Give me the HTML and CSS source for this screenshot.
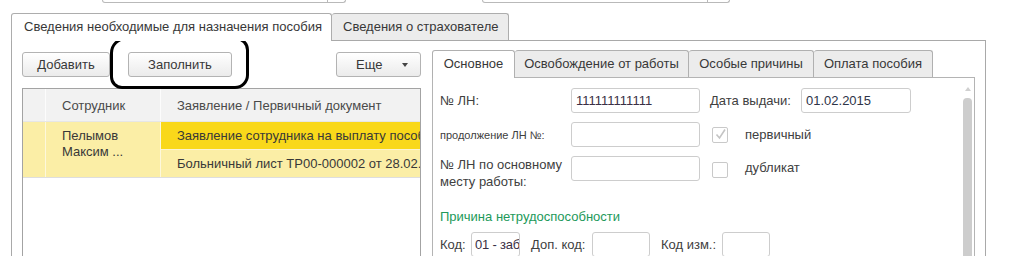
FILE: index.html
```html
<!DOCTYPE html>
<html lang="ru">
<head>
<meta charset="utf-8">
<title>Сведения</title>
<link rel="stylesheet" href="styles.css">
</head>
<body>
<div class="page">
  <div class="topfields">
    <div class="tf tf1"><span class="tf-text"></span><span class="tf-btn"></span></div>
    <div class="tf tf2"><span class="tf-text"></span><span class="tf-btn"></span></div>
  </div>
  <div class="maintabs">
    <div class="mtab active">Сведения необходимые для назначения пособия</div>
    <div class="mtab">Сведения о страхователе</div>
  </div>
  <div class="mainpanel">
    <div class="leftcol">
      <div class="btnrow">
        <button class="btn btn-add">Добавить</button>
        <button class="btn btn-fill">Заполнить</button>
        <div class="oval"></div>
        <button class="btn btn-more"><span>Еще</span><span class="caret"></span></button>
      </div>
      <div class="table">
        <div class="thead">
          <div class="c c1"></div>
          <div class="c c2">Сотрудник</div>
          <div class="c c3">Заявление / Первичный документ</div>
        </div>
        <div class="trow">
          <div class="c c1"></div>
          <div class="c c2 emp">Пелымов<br>Максим ...</div>
          <div class="c c3 docs">
            <div class="doc sel">Заявление сотрудника на выплату пособия</div>
            <div class="doc">Больничный лист ТР00-000002 от 28.02.2015</div>
          </div>
        </div>
      </div>
    </div>
    <div class="rightcol">
      <div class="subtabs">
        <div class="stab active w1">Основное</div>
        <div class="stab w2">Освобождение от работы</div>
        <div class="stab w3">Особые причины</div>
        <div class="stab w4">Оплата пособия</div>
      </div>
      <div class="subpanel">
        <div class="form">
          <div class="frow r1">
            <div class="lbl lw">№ ЛН:</div>
            <div class="inp iw num">111111111111</div>
            <div class="lbl ldate">Дата выдачи:</div>
            <div class="inp idate">01.02.2015</div>
          </div>
          <div class="frow r2">
            <div class="lbl lw small">продолжение ЛН №:</div>
            <div class="inp iw"></div>
            <div class="chk checked"><svg width="13" height="13" viewBox="0 0 13 13"><path d="M2.5 6.5 L5.5 10 L11 1.5" fill="none" stroke="#c4c4c4" stroke-width="1.6"/></svg></div>
            <div class="lbl chklbl">первичный</div>
          </div>
          <div class="frow r3">
            <div class="lbl lw two">№ ЛН по основному<br>месту работы:</div>
            <div class="inp iw"></div>
            <div class="chk chk2"></div>
            <div class="lbl chklbl chklbl2">дубликат</div>
          </div>
          <div class="section">Причина нетрудоспособности</div>
          <div class="frow r5">
            <div class="lbl lk1">Код:</div>
            <div class="inp ik1"><span class="clip">01 - заболевание</span></div>
            <div class="lbl lk2">Доп. код:</div>
            <div class="inp ik2"></div>
            <div class="lbl lk3">Код изм.:</div>
            <div class="inp ik3"></div>
          </div>
        </div>
        <div class="scroll">
          <div class="arrow"></div>
          <div class="thumb"></div>
        </div>
      </div>
    </div>
  </div>
</div>
</body>
</html>
```
FILE: styles.css
```css
* { box-sizing: border-box; }
html, body { margin: 0; padding: 0; background: #fff; }
body {
  width: 1012px;
  height: 256px;
  overflow: hidden;
  font-family: "Liberation Sans", Arial, sans-serif;
  font-size: 13px;
  color: #383838;
}
.page { width: 1012px; }

/* top fields (only bottom visible) */
.topfields { display: flex; height: 13px; align-items: flex-start; }
.tf {
  display: flex;
  height: 3px;
  border: 1px solid #b9b9b9;
  border-top: none;
  border-radius: 0 0 3px 3px;
}
.tf1 { margin-left: 102px; width: 244px; }
.tf2 { margin-left: 136px; width: 248px; }
.tf-text { flex: 1; }
.tf1 .tf-btn { width: 18px; border-left: 1px solid #b9b9b9; }
.tf2 .tf-btn { width: 22px; border-left: 1px solid #b9b9b9; }

/* main tabs */
.maintabs { display: flex; align-items: flex-end; height: 27px; padding-left: 11px; }
.mtab {
  height: 27px;
  border: 1px solid #adadad;
  border-bottom: none;
  border-radius: 3px 3px 0 0;
  background: #ececec;
  display: flex;
  align-items: center;
  white-space: nowrap;
}
.mtab.active {
  width: 321px;
  height: 28px;
  margin-bottom: -1px;
  background: #fff;
  position: relative;
  z-index: 1;
  padding-left: 12px;
  padding-bottom: 2px;
}
.mtab:not(.active) {
  width: 177px;
  border-left: none;
  padding-left: 11px;
  padding-bottom: 1px;
}

/* main panel */
.mainpanel {
  margin-left: 11px;
  width: 975px;
  height: 230px;
  border: 1px solid #a9a9a9;
  border-bottom: none;
  padding: 9px 10px 0 10px;
  display: flex;
  gap: 11px;
}
.leftcol { width: 399px; margin-top: 2px; display: flex; flex-direction: column; }
.btnrow { display: flex; position: relative; height: 25px; }
.btn {
  height: 25px;
  font-family: inherit;
  font-size: 13px;
  color: #383838;
  border: 1px solid #b3b3b3;
  border-radius: 3px;
  background: linear-gradient(#ffffff, #ebebeb);
  padding: 0;
  margin: 0;
}
.btn-add { width: 88px; }
.btn-fill { width: 104px; margin-left: 18px; }
.btn-more {
  width: 85px;
  margin-left: auto;
  display: flex;
  align-items: center;
  padding-left: 19px;
}
.btn-more span:first-child { flex: 1; text-align: left; }
.caret {
  width: 0; height: 0;
  border-left: 3.5px solid transparent;
  border-right: 3.5px solid transparent;
  border-top: 4px solid #444;
  margin-right: 12px;
}
.oval {
  position: absolute;
  left: 88px;
  top: -15px;
  width: 139px;
  height: 52px;
  border: 3px solid #000;
  border-radius: 16px 13px 14px 12px;
  pointer-events: none;
}

/* table */
.table {
  margin-top: 11px;
  border: 1px solid #a3a3a3;
  border-bottom: none;
  flex: 1;
}
.thead, .trow { display: flex; }
.thead { height: 33px; background: #f2f2f2; border-bottom: 1px solid #e6e6e6; }
.thead .c { display: flex; align-items: center; }
.c { white-space: nowrap; overflow: hidden; }
.c1 { width: 23px; border-right: 1px solid #fcfcfc; }
.c2 { width: 115px; border-right: 1px solid #fcfcfc; padding-left: 16px; }
.c3 { flex: 1; padding-left: 16px; }
.thead .c { color: #4a4a4a; }
.trow { height: 56px; background: #fbeea6; border-bottom: 1px solid #dedede; }
.trow .c1, .trow .c2 { border-right-color: #fdf8dc; }
.emp { line-height: 16px; padding-top: 6px; }
.docs { padding-left: 0; display: flex; flex-direction: column; }
.doc { height: 27px; line-height: 27px; padding-left: 16px; overflow: hidden; }
.doc.sel { background: #f9d81a; border-bottom: 1px solid #fdf4cf; height: 28px; }

/* right column */
.rightcol { width: 543px; display: flex; flex-direction: column; }
.subtabs { display: flex; align-items: flex-end; height: 27px; }
.stab {
  height: 27px;
  border: 1px solid #b0b0b0;
  border-bottom: none;
  border-radius: 3px 3px 0 0;
  background: #ececec;
  display: flex;
  align-items: center;
  justify-content: center;
  padding-bottom: 1px;
  white-space: nowrap;
}
.stab + .stab { border-left: none; }
.stab.active { background: #fff; height: 28px; margin-bottom: -1px; position: relative; z-index: 1; padding-bottom: 2px; }
.w1 { width: 83px; }
.w2 { width: 174px; }
.w3 { width: 125px; }
.w4 { width: 119px; }

.subpanel {
  flex: 1;
  border: 1px solid #b4b4b4;
  border-bottom: none;
  display: flex;
}
.form { flex: 1; padding: 10px 0 0 7px; }
.frow { display: flex; align-items: center; }
.r2, .r3 { margin-top: 9px; }
.r3 { align-items: flex-start; }
.lbl { color: #404040; white-space: nowrap; }
.lw { width: 131px; }
.small { font-size: 11px; }
.two { line-height: 17px; }
.inp {
  height: 25px;
  border: 1px solid #cdcdcd;
  border-radius: 3px;
  padding-left: 4px;
  line-height: 23px;
  color: #3a2f45;
  white-space: nowrap;
  overflow: hidden;
  background: #fff;
}
.clip { display: block; overflow: hidden; width: 100%; letter-spacing: -0.2px; }
.iw { width: 129px; }
.ldate { margin-left: 10px; width: 91px; }
.idate { width: 110px; color: #2e3448; }
.chk {
  width: 16px; height: 16px;
  margin-left: 12px;
  border: 1px solid #c9c9c9;
  border-radius: 2px;
  display: flex; align-items: center; justify-content: center;
}
.chk2 { margin-top: 6px; }
.chklbl { margin-left: 17px; }
.chklbl2 { margin-top: 4px; }
.section {
  margin-top: 19px;
  height: 16px;
  line-height: 16px;
  color: #22995a;
}
.r5 { margin-top: 7px; }
.lk1 { width: 31px; }
.ik1 { width: 49px; padding-left: 3px; }
.lk2 { margin-left: 11px; width: 61px; }
.ik2 { width: 58px; }
.lk3 { margin-left: 11px; width: 61px; }
.ik3 { width: 48px; }

.scroll { width: 9px; margin-right: 2px; display: flex; flex-direction: column; align-items: center; }
.arrow {
  margin-top: 9px;
  width: 0; height: 0;
  border-left: 3px solid transparent;
  border-right: 3px solid transparent;
  border-bottom: 4px solid #d0d0d0;
}
.thumb {
  margin-top: 7px;
  width: 9px;
  flex: 1;
  background: #cdcdcd;
  border-radius: 4px 4px 0 0;
}
```
